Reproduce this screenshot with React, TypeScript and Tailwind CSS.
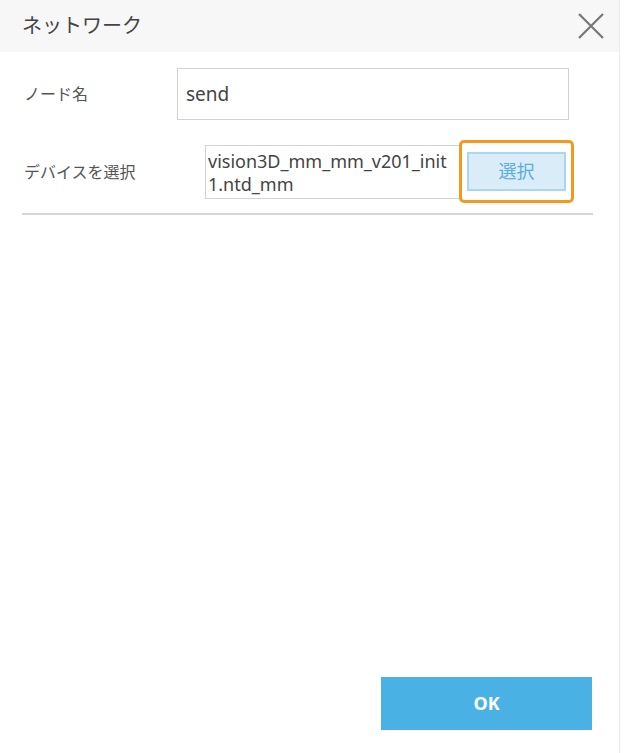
const font = { fontFamily: '"Noto Sans", "Noto Sans CJK JP", sans-serif' };

export default function App() {
  return (
    <div
      className="w-[620px] h-[753px] flex flex-col bg-white border-r border-[#ececec] text-[#555]"
      style={font}
    >
      <div className="h-[52px] flex items-center justify-between bg-[#f7f7f7] pl-[22px] pr-[12px]">
        <h2 className="text-[20px] text-[#444]">ネットワーク</h2>
        <button className="w-[32px] h-[32px] flex items-center justify-center">
          <svg width="28" height="28" viewBox="0 0 28 28">
            <path d="M2 2 L26 26 M26 2 L2 26" stroke="#777" strokeWidth="2.2" />
          </svg>
        </button>
      </div>

      <div className="px-[22px] pt-[16px]">
        <div className="flex items-center">
          <p className="w-[155px] pl-[2px] text-[16px]">ノード名</p>
          <div className="w-[392px] h-[52px] flex items-center px-[8px] border border-[#d2d2d2] text-[19px] text-[#444]">
            send
          </div>
        </div>

        <div className="flex items-center mt-[20px]">
          <p className="w-[183px] pl-[2px] text-[16px]">デバイスを選択</p>
          <div className="w-[255px] h-[54px] flex flex-col justify-center pl-[2px] pt-[2px] border border-[#d2d2d2] text-[18px] leading-[23px] text-[#444]">
            <span>vision3D_mm_mm_v201_init</span>
            <span>1.ntd_mm</span>
          </div>
          <div className="w-[115px] h-[63px] -ml-px flex items-center justify-center border-[3px] border-[#f39a1e] rounded-[5px]">
            <button className="w-[99px] h-[39px] bg-[#d9ecf7] border-2 border-[#a9d6f0] text-[18px] text-[#5aade0]">
              選択
            </button>
          </div>
        </div>

        <div className="w-[571px] h-[2px] bg-[#d6d6d6] mt-[10px]" />
      </div>

      <div className="flex-1" />

      <div className="flex justify-end pr-[27px] pb-[23px]">
        <button className="w-[211px] h-[53px] bg-[#4ab1e5] text-white text-[18px] font-bold">
          OK
        </button>
      </div>
    </div>
  );
}
